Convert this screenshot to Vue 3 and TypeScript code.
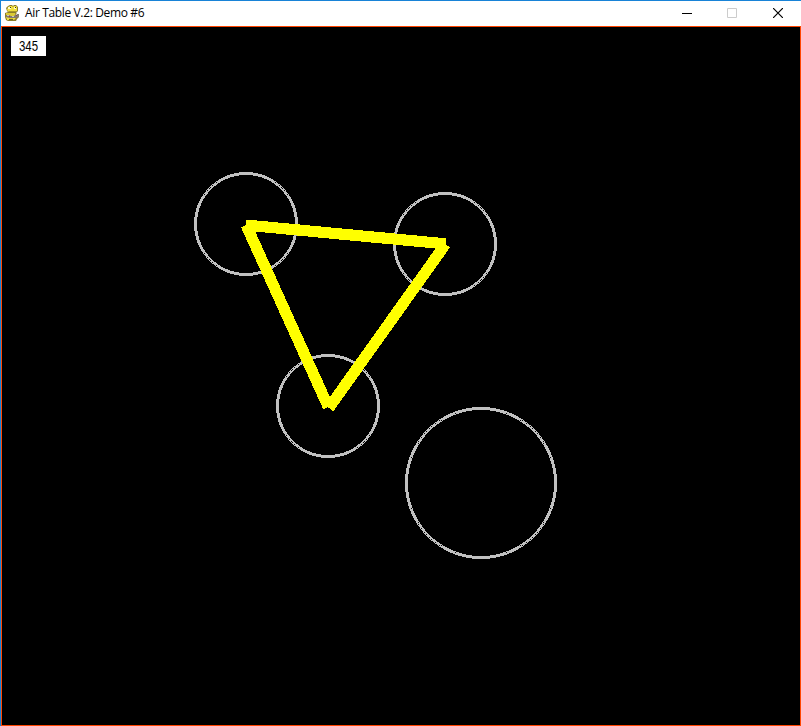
<script setup lang="ts">
interface Puck { x: number; y: number; r: number }
interface Spring { x1: number; y1: number; x2: number; y2: number }

const frameRate = 345

const pucks: Puck[] = [
  { x: 246, y: 224, r: 52 },
  { x: 445, y: 244, r: 52 },
  { x: 328, y: 406, r: 52 },
  { x: 481, y: 483, r: 76 },
]

const springs: Spring[] = [
  { x1: 246, y1: 225.1, x2: 446, y2: 243.9 },
  { x1: 246.1, y1: 225, x2: 328.4, y2: 407.1 },
  { x1: 445.5, y1: 244.1, x2: 328.8, y2: 408 },
]

const RING_COUNT = 3

// Rasterises a puck outline as nested one-pixel rings, one octant mirrored eight ways.
// Gaps between neighbouring rings are filled on alternate rows, giving a dithered edge.
function outline(p: Puck): string {
  const cells = new Set<string>()
  const add = (i: number, j: number) => {
    cells.add(`${i},${j}`)
    cells.add(`${j},${i}`)
  }
  const ringAt = (n: number, j: number) => Math.round(Math.sqrt(n * n - (j + 0.5) ** 2) - 0.5)
  for (let j = 0; j < p.r; j++) {
    const outer = ringAt(p.r - 0.5, j)
    if (j > outer) break
    for (let k = 0; k < RING_COUNT; k++) {
      const i = ringAt(p.r - 0.5 - k, j)
      if (j <= i) add(i, j)
    }
    if (j % 2 === 0) {
      const inner = ringAt(p.r + 0.5 - RING_COUNT, j)
      for (let i = Math.max(inner, j); i <= outer; i++) add(i, j)
    }
  }
  let d = ''
  for (const cell of cells) {
    const [i, j] = cell.split(',').map(Number)
    for (const x of [p.x + i, p.x - 1 - i]) {
      for (const y of [p.y + j, p.y - 1 - j]) d += `M${x} ${y}h1v1h-1z`
    }
  }
  return d
}
</script>

<template>
  <div class="window">
    <header class="titlebar">
      <svg class="logo" width="16" height="18" viewBox="0 0 16 18">
        <path d="M4 2 6 1h2l1 1 1-1h2l2 2v4l-2 2 1 1h2v3l-2 2-1 2H4l-2-1-1-3V9l3-1-1-1-1-3z" fill="#8c7d2a" />
        <path d="M4 3 6 2h2l1 1 1-1h2l1 1v4l-2 1H5L3 6z" fill="#f0e040" />
        <path d="M4 9h7l1 2v3l-2 2H4l-2-2V9z" fill="#dccb34" />
        <path d="M4 3h3v2H4zM10 3h2v2h-2z" fill="#fffbc8" />
        <path d="M6 3h1v1H6zM11 3h1v1h-1z" fill="#39371e" />
        <path d="M5 7h7v1H5z" fill="#a8972c" />
        <path d="M2 11h3l2 1h3l2-2h3v3l-3 1H6l-4-1z" fill="#817b70" />
        <path d="M3 11h2v1H3zM8 12h2v1H8zM12 10h1v1h-1z" fill="#c9c5c0" />
        <path d="M5 12h1v1H5zM12 11h1v1h-1z" fill="#a73d32" />
        <path d="M3 14h2v2H3zM9 14h2v1H9z" fill="#f0e040" />
        <path d="M5 15h4v1H5z" fill="#6b6024" />
      </svg>
      <span class="title">Air Table V.2: Demo #6</span>
      <div class="controls">
        <svg class="control minimize" width="10" height="10" viewBox="0 0 10 10">
          <path d="M0 5.5h10" stroke="#000" shape-rendering="crispEdges" />
        </svg>
        <svg class="control" width="10" height="10" viewBox="0 0 10 10">
          <path d="M.5.5h9v9h-9z" fill="none" stroke="#ccc" />
        </svg>
        <svg class="control" width="10" height="10" viewBox="0 0 10 10">
          <path d="m0 0 10 10M10 0 0 10" stroke="#000" stroke-width="1.2" />
        </svg>
      </div>
    </header>
    <main class="table">
      <svg class="scene" width="798" height="698" viewBox="2 27 798 698" shape-rendering="crispEdges">
        <path v-for="(p, i) in pucks" :key="`puck-${i}`" :d="outline(p)" fill="#c0c0c0" />
        <g stroke="#ff0" stroke-width="11.2">
          <line v-for="(s, i) in springs" :key="i" :x1="s.x1" :y1="s.y1" :x2="s.x2" :y2="s.y2" />
        </g>
      </svg>
      <div class="fps"><span class="fps-value">{{ frameRate }}</span></div>
    </main>
  </div>
</template>

<style>
body {
  overflow: hidden;
}
</style>

<style scoped>
.window {
  box-sizing: border-box;
  width: 801px;
  height: 726px;
  display: flex;
  flex-direction: column;
  border-top: 1px solid #1883d7;
  border-left: 1px solid #1883d7;
  background: #fff;
}
.titlebar {
  box-sizing: border-box;
  height: 25px;
  display: flex;
  align-items: flex-start;
  padding: 3px 18px 0 3px;
}
.logo {
  flex: none;
}
.title {
  margin: 1px 0 0 5px;
  font: 12px/16px "Open Sans", "Noto Sans", sans-serif;
  letter-spacing: -0.36px;
  color: #000;
  white-space: nowrap;
}
.controls {
  display: flex;
  gap: 36px;
  margin-left: auto;
  padding-top: 4px;
}
.control {
  display: block;
}
.minimize {
  margin-right: -1px;
}
.table {
  box-sizing: border-box;
  height: 700px;
  border: 1px solid #ff4500;
  background: #000;
  position: relative;
}
.scene {
  display: block;
}
.fps {
  position: absolute;
  left: 9px;
  top: 9px;
  width: 35px;
  height: 20px;
  display: flex;
  align-items: center;
  justify-content: center;
  background: #fff;
}
.fps-value {
  font: 15px/20px "Liberation Sans", Arial, sans-serif;
  color: #000;
  transform: scaleX(0.76);
}
</style>
